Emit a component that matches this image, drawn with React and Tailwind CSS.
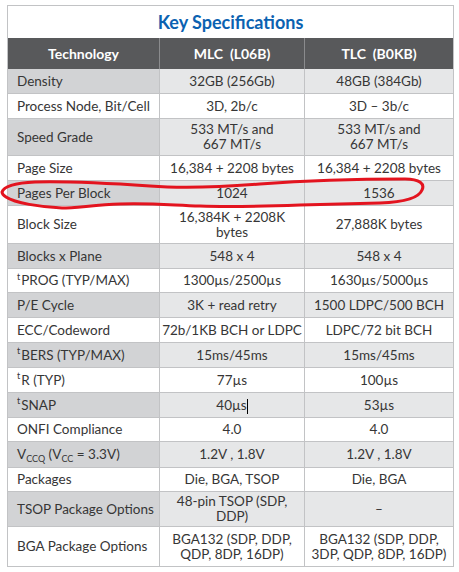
import React from 'react';

const T = () => <sup className="text-[9px] top-[-0.6em] mr-px">t</sup>;

const rows = [
    { label: 'Density', mlc: '32GB (256Gb)', tlc: '48GB (384Gb)', h: 'h-[25px]' },
    { label: 'Process Node, Bit/Cell', mlc: '3D, 2b/c', tlc: '3D – 3b/c', h: 'h-[25px]' },
    { label: 'Speed Grade', mlc: ['533 MT/s and', '667 MT/s'], tlc: ['533 MT/s and', '667 MT/s'], h: 'h-[37px]' },
    { label: 'Page Size', mlc: '16,384 + 2208 bytes', tlc: '16,384 + 2208 bytes', h: 'h-[25px]' },
    { label: 'Pages Per Block', mlc: '1024', tlc: '1536', h: 'h-[25px]' },
    { label: 'Block Size', mlc: ['16,384K + 2208K', 'bytes'], tlc: '27,888K bytes', h: 'h-[38px]' },
    { label: 'Blocks x Plane', mlc: '548 x 4', tlc: '548 x 4', h: 'h-[25px]' },
    { label: <><T />PROG (TYP/MAX)</>, mlc: '1300µs/2500µs', tlc: '1630µs/5000µs', h: 'h-[24px]' },
    { label: 'P/E Cycle', mlc: '3K + read retry', tlc: '1500 LDPC/500 BCH', h: 'h-[25px]' },
    { label: 'ECC/Codeword', mlc: '72b/1KB BCH or LDPC', tlc: 'LDPC/72 bit BCH', h: 'h-[25px]' },
    { label: <><T />BERS (TYP/MAX)</>, mlc: '15ms/45ms', tlc: '15ms/45ms', h: 'h-[25px]' },
    { label: <><T />R (TYP)</>, mlc: '77µs', tlc: '100µs', h: 'h-[25px]' },
    {
        label: <><T />SNAP</>,
        mlc: <>40µs<span className="inline-block w-px h-[15px] bg-black align-middle" /></>,
        tlc: '53µs',
        h: 'h-[25px]',
    },
    { label: 'ONFI Compliance', mlc: '4.0', tlc: '4.0', h: 'h-[24px]' },
    {
        label: <>V<sub className="text-[9px] bottom-[-0.3em]">CCQ</sub> (V<sub className="text-[9px] bottom-[-0.3em]">CC</sub> = 3.3V)</>,
        mlc: '1.2V , 1.8V',
        tlc: '1.2V , 1.8V',
        h: 'h-[26px]',
    },
    { label: 'Packages', mlc: 'Die, BGA, TSOP', tlc: 'Die, BGA', h: 'h-[24px]' },
    { label: 'TSOP Package Options', mlc: ['48-pin TSOP (SDP,', 'DDP)'], tlc: '–', h: 'h-[35px]' },
    { label: 'BGA Package Options', mlc: ['BGA132 (SDP, DDP,', 'QDP, 8DP, 16DP)'], tlc: ['BGA132 (SDP, DDP,', '3DP, QDP, 8DP, 16DP)'], h: 'h-[39px]' },
];

const Value = ({ v }) =>
    Array.isArray(v) ? (
        <div className="leading-[15px] whitespace-nowrap">
            {v.map((line, i) => (
                <div key={i}>{line}</div>
            ))}
        </div>
    ) : (
        <span className="whitespace-nowrap">{v}</span>
    );

const App = () => {
    return (
        <div className="relative w-[459px] h-[572px] bg-white overflow-hidden font-['Lato',sans-serif] text-[13.5px] text-[#363636]">
            <div className="ml-[7px] mt-[5px] w-[447px] border border-[#c2c3c5]">
                {/* Title */}
                <div className="h-[32px] flex items-center justify-center text-[18px] font-bold text-[#0b62b1]">
                    Key Specifications
                </div>

                {/* Header */}
                <div className="h-[31px] grid grid-cols-[152px_145px_148px] bg-[#58595b] text-white font-bold text-[14px]">
                    <div className="flex items-center justify-center border-r border-[#8a8b8d]">Technology</div>
                    <div className="flex items-center justify-center border-r border-[#8a8b8d]">MLC&nbsp;&nbsp;(L06B)</div>
                    <div className="flex items-center justify-center">TLC&nbsp;&nbsp;(B0KB)</div>
                </div>

                {/* Rows */}
                {rows.map((row, i) => {
                    const gray = i % 2 === 0;
                    const last = i === rows.length - 1;
                    return (
                        <div
                            key={i}
                            className={`${row.h} grid grid-cols-[152px_145px_148px] ${last ? '' : 'border-b border-[#c2c3c5]'}`}
                        >
                            <div className={`flex items-center pl-[9px] border-r border-[#c2c3c5] whitespace-nowrap ${gray ? 'bg-[#d2d3d5]' : 'bg-white'}`}>
                                <span>{row.label}</span>
                            </div>
                            <div className={`flex items-center justify-center text-center border-r border-[#c2c3c5] ${gray ? 'bg-[#e6e7e8]' : 'bg-white'}`}>
                                <Value v={row.mlc} />
                            </div>
                            <div className={`flex items-center justify-center text-center ${gray ? 'bg-[#e6e7e8]' : 'bg-white'}`}>
                                <Value v={row.tlc} />
                            </div>
                        </div>
                    );
                })}
            </div>

            {/* Hand-drawn red ellipse */}
            <svg className="absolute inset-0 pointer-events-none" width="459" height="572" viewBox="0 0 459 572">
                <path
                    d="M 2 192 C 4 186, 15 183, 35 182 C 70 181, 120 184, 150 186 C 175 188, 210 188, 260 184 C 300 181, 360 179, 405 179 C 420 179, 425 184, 422 190 C 419 198, 405 202, 380 203 L 300 205 C 270 206, 230 207, 200 206 C 170 205, 150 203, 120 204 C 95 205, 75 208, 62 208 C 40 207, 15 203, 6 197 C 3 195, 2 194, 2 192"
                    fill="none"
                    stroke="#e3141f"
                    strokeWidth="3"
                    strokeLinecap="round"
                />
            </svg>
        </div>
    );
};

export default App;
